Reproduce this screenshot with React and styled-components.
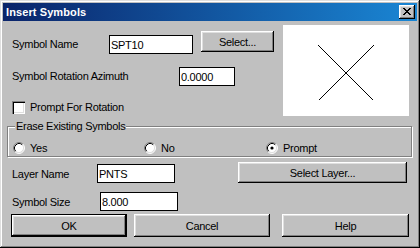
import React from "react";
import styled, { createGlobalStyle } from "styled-components";

const Global = createGlobalStyle`
  html, body { margin: 0; padding: 0; background: #c0c0c0; }
  * { box-sizing: border-box; }
`;

const Window = styled.div`
  width: 420px;
  height: 248px;
  padding: 3px;
  background: #c0c0c0;
  box-shadow: inset -1px -1px #000, inset 1px 1px #dfdfdf, inset -2px -2px #808080, inset 2px 2px #fff;
  display: flex;
  flex-direction: column;
  font-family: "Liberation Sans", Arial, sans-serif;
  font-size: 11px;
  letter-spacing: -0.28px;
  color: #000;
`;

const TitleBar = styled.div`
  height: 18px;
  display: flex;
  align-items: center;
  padding: 0 2px 0 3px;
  background: linear-gradient(to right, #0a246a, #1a86d4);
`;

const TitleText = styled.span`
  color: #fff;
  font-weight: bold;
  letter-spacing: 0.1px;
`;

const CloseButton = styled.div`
  width: 16px;
  height: 14px;
  margin-left: auto;
  background: #c0c0c0;
  box-shadow: inset -1px -1px #000, inset 1px 1px #fff, inset -2px -2px #808080, inset 2px 2px #dfdfdf;
  display: flex;
  align-items: center;
  justify-content: center;
  padding: 0 1px 1px 0;
`;

const Body = styled.div`
  flex: 1;
  display: flex;
  flex-direction: column;
`;

const TopSection = styled.div`
  display: flex;
  margin-top: 4px;
  height: 91px;
`;

const LeftCol = styled.div`
  flex: 1;
  display: flex;
  flex-direction: column;
  padding-left: 9px;
`;

const Row = styled.div`
  display: flex;
  align-items: ${(p) => p.$align || "flex-start"};
  margin-top: ${(p) => p.$mt || 0}px;
  padding-left: ${(p) => p.$pl || 0}px;
  padding-right: ${(p) => p.$pr || 0}px;
`;

const Label = styled.span`
  width: ${(p) => p.$w}px;
  margin-top: ${(p) => p.$mt || 0}px;
  line-height: 19px;
  white-space: nowrap;
  flex-shrink: 0;
`;

const TextBox = styled.input`
  width: ${(p) => p.$w}px;
  height: 19px;
  margin-top: ${(p) => p.$mt || 0}px;
  border: 1px solid #000;
  background: #fff;
  padding: 0 1px;
  font: inherit;
  letter-spacing: inherit;
  color: #000;
  outline: none;
  flex-shrink: 0;
`;

const Button = styled.button`
  width: ${(p) => p.$w}px;
  height: ${(p) => p.$h}px;
  margin-left: ${(p) => (p.$ml === "auto" ? "auto" : `${p.$ml || 0}px`)};
  margin-top: ${(p) => p.$mt || 0}px;
  padding: 0;
  background: #c0c0c0;
  border: ${(p) => (p.$default ? "1px solid #000" : "none")};
  box-shadow: inset -1px -1px #000, inset 1px 1px #fff, inset -2px -2px #808080, inset 2px 2px #dfdfdf;
  font: inherit;
  letter-spacing: inherit;
  color: #000;
  flex-shrink: 0;
  cursor: default;
`;

const Preview = styled.div`
  width: 126px;
  height: 91px;
  margin-right: 8px;
  background: #fff;
  flex-shrink: 0;
`;

const Checkbox = styled.span`
  width: 13px;
  height: 13px;
  background: #fff;
  box-shadow: inset 1px 1px #808080, inset 2px 2px #000, inset -1px -1px #fff, inset -2px -2px #dfdfdf;
  flex-shrink: 0;
`;

const CheckLabel = styled.span`
  margin-left: 5px;
  line-height: 13px;
`;

const Group = styled.div`
  position: relative;
  margin: 10px 0 0 4px;
  width: 405px;
  height: 31px;
  border: 1px solid #808080;
  box-shadow: 1px 1px 0 #fff, inset 1px 1px 0 #fff;
`;

const Legend = styled.span`
  position: absolute;
  top: -7px;
  left: 7px;
  padding: 0 1px;
  background: #c0c0c0;
  line-height: 13px;
  white-space: nowrap;
`;

const RadioRow = styled.div`
  display: grid;
  grid-template-columns: 131px 122px 1fr;
  padding: 15px 0 0 5px;
`;

const RadioItem = styled.div`
  display: flex;
  align-items: center;
  gap: 5px;
  line-height: 12px;
`;

const Radio = ({ checked }) => (
  <svg width="12" height="12" viewBox="0 0 12 12" style={{ flexShrink: 0 }}>
    <circle cx="6" cy="6" r="5" fill="#fff" />
    <path d="M2.11 9.89 A5.5 5.5 0 0 1 9.89 2.11" fill="none" stroke="#808080" strokeWidth="1" />
    <path d="M9.89 2.11 A5.5 5.5 0 0 1 2.11 9.89" fill="none" stroke="#fff" strokeWidth="1" />
    <path d="M2.82 9.18 A4.5 4.5 0 0 1 9.18 2.82" fill="none" stroke="#000" strokeWidth="1" />
    <path d="M9.18 2.82 A4.5 4.5 0 0 1 2.82 9.18" fill="none" stroke="#dfdfdf" strokeWidth="1" />
    {checked && <circle cx="6" cy="6" r="1.6" fill="#000" />}
  </svg>
);

const CloseGlyph = () => {
  const rows = ["11000011", "01100110", "00111100", "00011000", "00111100", "01100110", "11000011"];
  return (
    <svg width="8" height="7" viewBox="0 0 8 7" shapeRendering="crispEdges">
      {rows.map((r, y) =>
        r.split("").map((c, x) => (c === "1" ? <rect key={`${x}-${y}`} x={x} y={y} width="1" height="1" fill="#000" /> : null))
      )}
    </svg>
  );
};

export default function App() {
  return (
    <>
      <Global />
      <Window>
        <TitleBar>
          <TitleText>Insert Symbols</TitleText>
          <CloseButton>
            <CloseGlyph />
          </CloseButton>
        </TitleBar>
        <Body>
          <TopSection>
            <LeftCol>
              <Row $mt={6}>
                <Label $w={97} $mt={4}>Symbol Name</Label>
                <TextBox $w={84} $mt={4} readOnly value="SPT10" />
                <Button $w={73} $h={21} $ml={8}>Select...</Button>
              </Row>
              <Row $mt={13} $align="center">
                <Label $w={167}>Symbol Rotation Azimuth</Label>
                <TextBox $w={56} readOnly value="0.0000" />
              </Row>
              <Row $mt={15} $align="center">
                <Checkbox />
                <CheckLabel>Prompt For Rotation</CheckLabel>
              </Row>
            </LeftCol>
            <Preview>
              <svg width="126" height="91" viewBox="0 0 126 91" shapeRendering="crispEdges">
                <line x1="35.5" y1="20.5" x2="90.5" y2="75.5" stroke="#000" strokeWidth="1" />
                <line x1="90.5" y1="20.5" x2="35.5" y2="75.5" stroke="#000" strokeWidth="1" />
              </svg>
            </Preview>
          </TopSection>

          <Group>
            <Legend>Erase Existing Symbols</Legend>
            <RadioRow>
              <RadioItem>
                <Radio />
                <span>Yes</span>
              </RadioItem>
              <RadioItem>
                <Radio />
                <span>No</span>
              </RadioItem>
              <RadioItem>
                <Radio checked />
                <span>Prompt</span>
              </RadioItem>
            </RadioRow>
          </Group>

          <Row $mt={5} $pl={9} $pr={10}>
            <Label $w={85} $mt={3}>Layer Name</Label>
            <TextBox $w={78} $mt={2} readOnly value="PNTS" />
            <Button $w={169} $h={21} $ml="auto">Select Layer...</Button>
          </Row>

          <Row $mt={8} $pl={9}>
            <Label $w={88} $mt={1}>Symbol Size</Label>
            <TextBox $w={78} readOnly value="8.000" />
          </Row>

          <Row $mt={2} $pl={8}>
            <Button $w={116} $h={23} $default>OK</Button>
            <Button $w={136} $h={23} $ml={7}>Cancel</Button>
            <Button $w={127} $h={23} $ml={12}>Help</Button>
          </Row>
        </Body>
      </Window>
    </>
  );
}
